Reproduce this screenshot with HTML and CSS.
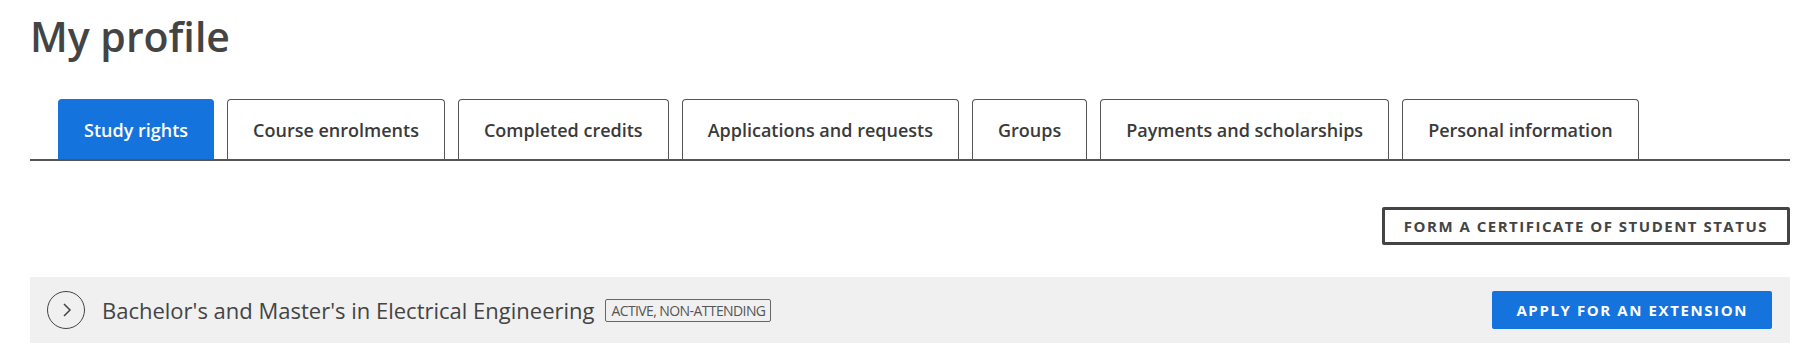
FILE: index.html
```html
<!DOCTYPE html>
<html lang="en">
<head>
<meta charset="UTF-8">
<title>My profile</title>
<link rel="stylesheet" href="styles.css">
</head>
<body>
<div class="page">
  <h1>My profile</h1>

  <nav class="tabs">
    <button class="tab active">Study rights</button>
    <button class="tab">Course enrolments</button>
    <button class="tab">Completed credits</button>
    <button class="tab">Applications and requests</button>
    <button class="tab">Groups</button>
    <button class="tab">Payments and scholarships</button>
    <button class="tab">Personal information</button>
  </nav>

  <div class="actions">
    <button class="btn-outline">Form a certificate of student status</button>
  </div>

  <div class="study-right">
    <button class="toggle" aria-label="Expand">
      <svg width="14" height="16" viewBox="0 0 14 16"><path d="M5 2 L11 8 L5 14" fill="none" stroke="#444" stroke-width="1.5"/></svg>
    </button>
    <span class="sr-title">Bachelor's and Master's in Electrical Engineering</span>
    <span class="badge">Active, non-attending</span>
    <button class="btn-primary">Apply for an extension</button>
  </div>
</div>
</body>
</html>
```

FILE: styles.css
```css
body{margin:0;font-family:"Open Sans",Arial,sans-serif;color:#444;background:#fff}
.page{padding:0 10px 0 30px}
h1{margin:0;padding-top:8px;font-size:41px;font-weight:600;line-height:56px;color:#444}
button{font-family:inherit;cursor:pointer}

.tabs{display:flex;gap:13px;padding-left:28px;margin-top:35px;border-bottom:2px solid #555}
.tab{height:60px;padding:0 25px;border:1px solid #555;border-bottom:none;border-radius:4px 4px 0 0;background:#fff;color:#3a3a3a;font-size:18px;font-weight:600}
.tab.active{background:#1473dc;border-color:#1473dc;color:#fff}

.actions{display:flex;justify-content:flex-end;margin-top:46px}
.btn-outline{height:38px;padding:0 19px;border:3px solid #444;border-radius:2px;background:#fff;color:#444;font-size:15px;font-weight:700;text-transform:uppercase;letter-spacing:1.5px}

.study-right{display:flex;align-items:center;height:66px;margin-top:32px;padding:0 18px 0 17px;background:#f0f0f0}
.toggle{display:flex;align-items:center;justify-content:center;width:38px;height:38px;padding:0;border:1.5px solid #444;border-radius:50%;background:transparent}
.sr-title{margin-left:17px;font-size:22px;color:#444}
.badge{margin-left:11px;padding:1px 5px;border:1px solid #666;border-radius:2px;font-size:14px;color:#555;text-transform:uppercase;letter-spacing:-.6px}
.btn-primary{margin-left:auto;height:38px;padding:0 24px;border:none;border-radius:2px;background:#1473dc;color:#fff;font-size:15px;font-weight:700;text-transform:uppercase;letter-spacing:1.6px}
```
